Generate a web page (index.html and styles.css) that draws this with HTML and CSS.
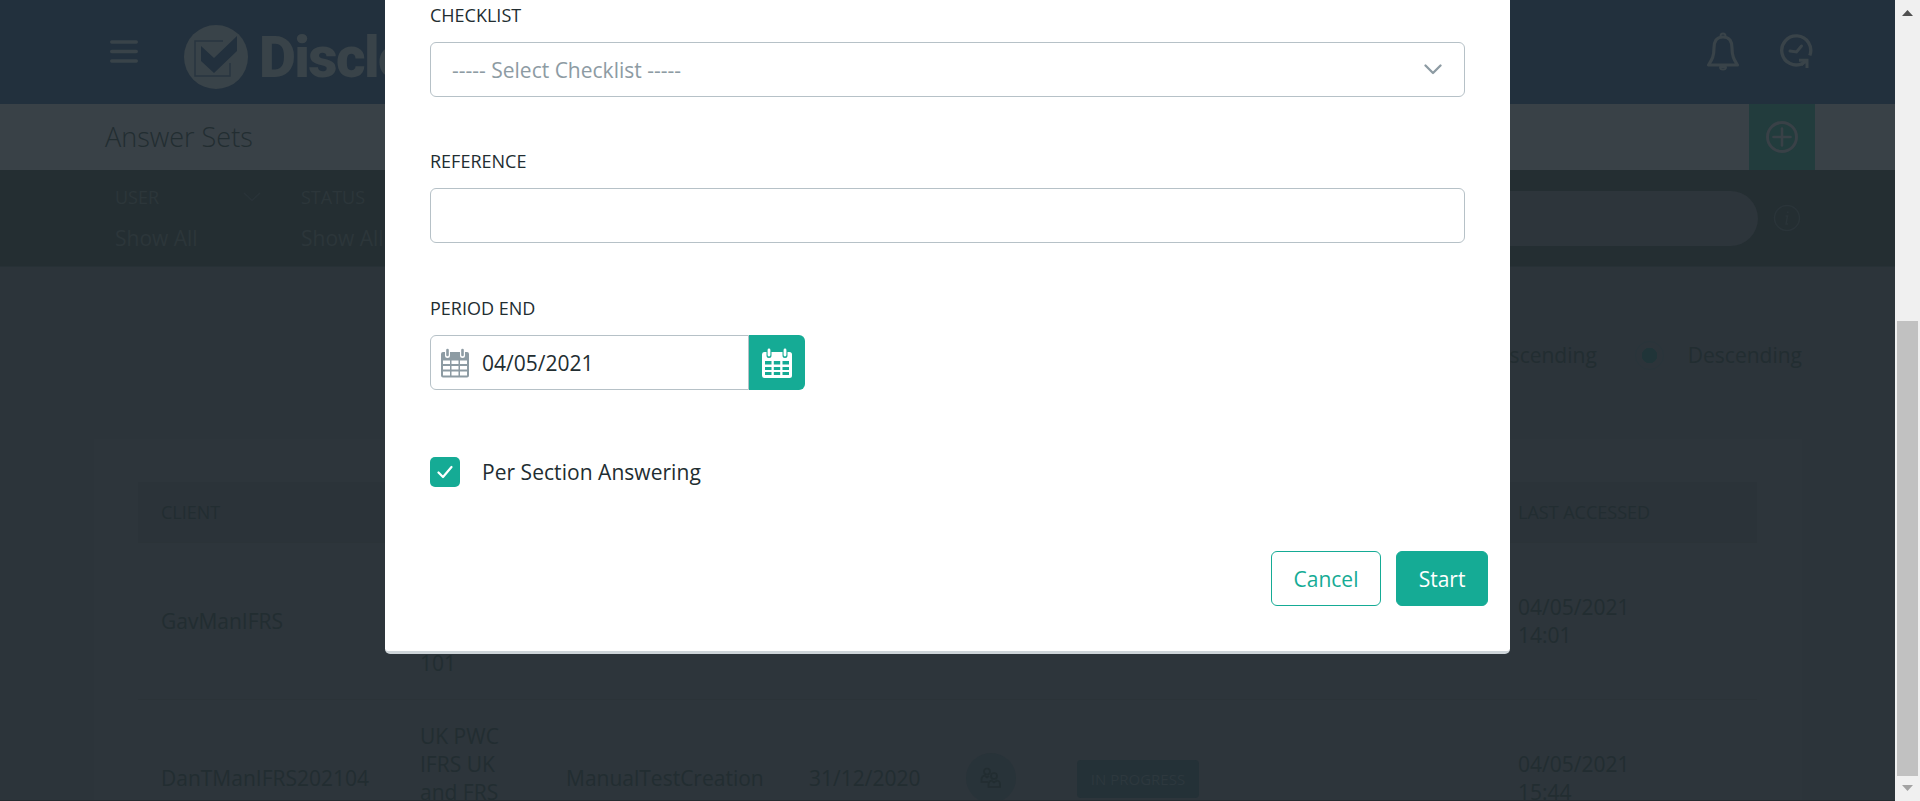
FILE: index.html
```html
<!DOCTYPE html>
<html lang="en">
<head>
<meta charset="utf-8">
<title>Answer Sets</title>
<link rel="stylesheet" href="styles.css">
</head>
<body>
<div class="page">
  <header class="topbar">
    <svg class="menu" width="28" height="23" viewBox="0 0 28 23"><path d="M1.7 2H26.3M1.7 11.5H26.3M1.7 21H26.3" stroke="currentColor" stroke-width="3.4" stroke-linecap="round"/></svg>
    <svg class="logo" width="64" height="66" viewBox="0 0 64 66">
      <circle cx="32" cy="33" r="32" fill="currentColor"/>
      <path d="M39 17H11V52H46V39" fill="none" stroke="#293640" stroke-width="1.5"/>
      <path d="M17 22L30 34L53 12V27L30 49L17 37Z" fill="#22303d"/>
    </svg>
    <span class="brand">Disclose</span>
    <svg class="bell" width="34" height="40" viewBox="0 0 34 40" fill="none" stroke="currentColor" stroke-width="3.2" stroke-linejoin="round"><path d="M17 5C10 5 8 10 8 16C8 25 5.500 28 2.500 33H31.500C28.500 28 26 25 26 16C26 10 24 5 17 5Z"/><path d="M14.500 4a2.500 2.500 0 0 1 5 0M14 35a3 2.500 0 0 0 6 0z" stroke-width="2"/></svg>
    <svg class="clock" width="34" height="34" viewBox="0 0 34 34" fill="none" stroke="currentColor" stroke-width="3.400"><path d="M30.800 21.500A14.500 14.500 0 1 0 24 29.200"/><path d="M11 17L17.500 18L22.500 12" stroke-linecap="round" stroke-width="3"/><path d="M20 26.300H28V34.500M28 26L22 31" stroke-width="3"/></svg>
  </header>
  <div class="titlebar">
    <h1>Answer Sets</h1>
    <div class="add"><svg width="34" height="34" viewBox="0 0 34 34" fill="none" stroke="currentColor" stroke-width="3"><circle cx="17" cy="17" r="14.500"/><path d="M17 8.500V25.500M8.500 17H25.500" stroke-width="2.600" stroke-linecap="round"/></svg></div>
  </div>
  <div class="filters">
    <div class="filter"><div class="cap">USER <svg width="18" height="12" viewBox="0 0 18 12" fill="none" stroke="#293338" stroke-width="1.500"><path d="M1 2L9 9.500L17 2"/></svg></div><div class="val">Show All</div></div>
    <div class="filter"><div class="cap">STATUS</div><div class="val">Show All</div></div>
    <div class="search"></div>
    <svg class="info" width="28" height="28" viewBox="0 0 28 28" fill="none" stroke="#2a3439" stroke-width="1.500"><circle cx="14" cy="14" r="12.500"/><path d="M12.500 12H14.500L13 20H15M14.800 7.500V9"/></svg>
  </div>
  <div class="order"><span>Ascending</span><i class="radio"></i><span>Descending</span></div>
  <main class="card">
    <div class="row head"><div>CLIENT</div><div></div><div></div><div></div><div></div><div></div><div>LAST ACCESSED</div></div>
    <div class="row"><div>GavManIFRS</div><div>UK PWC<br>IFRS UK<br>and FRS<br>101</div><div></div><div></div><div></div><div></div><div>04/05/2021<br>14:01</div></div>
    <div class="row"><div>DanTManIFRS202104</div><div>UK PWC<br>IFRS UK<br>and FRS<br>101</div><div>ManualTestCreation</div><div>31/12/2020</div>
      <div><span class="people"><svg width="22" height="22" viewBox="0 0 22 22" fill="none" stroke="currentColor" stroke-width="1.700"><circle cx="7" cy="4.500" r="3"/><circle cx="14" cy="9" r="3"/><path d="M8 15H1.500V12Q2 9 4.500 8.500L7 10.500L9 9M8.500 20V17Q9 14 11.500 13.500L14 15.500L17 13.500Q20 14 20 17V20Z"/></svg></span></div>
      <div><span class="badge">IN PROGRESS</span></div><div>04/05/2021<br>15:44</div></div>
  </main>
  <div class="edge"></div>
</div>

<section class="modal">
  <label class="label">CHECKLIST</label>
  <div class="field select"><span>----- Select Checklist -----</span><svg width="18" height="12" viewBox="0 0 18 12" fill="none" stroke="#8d9ba3" stroke-width="2.300" stroke-linecap="round" stroke-linejoin="round"><path d="M1.500 1.500L9 9L16.500 1.500"/></svg></div>
  <label class="label">REFERENCE</label>
  <div class="field"></div>
  <label class="label period">PERIOD END</label>
  <div class="date">
    <div class="field">
      <svg width="28" height="30" viewBox="0 0 28 30"><path fill="#8d9ba3" fill-rule="evenodd" d="M2 4H26Q28 4 28 6V27.500Q28 29.500 26 29.500H2Q0 29.500 0 27.500V6Q0 4 2 4ZM2 12.500V16H9V12.500ZM10.500 12.500V16H17.500V12.500ZM19 12.500V16H26V12.500ZM2 18V21.500H9V18ZM10.500 18V21.500H17.500V18ZM19 18V21.500H26V18ZM2 23.500V27.500H9V23.500ZM10.500 23.500V27.500H17.500V23.500ZM19 23.500V27.500H26V23.500Z"/><path d="M6.500 2.500V7.500M21.500 2.500V7.500" stroke="#fff" stroke-width="5" stroke-linecap="round"/><path d="M6.500 2V7M21.500 2V7" stroke="#8d9ba3" stroke-width="2.600" stroke-linecap="round"/></svg>
      <span>04/05/2021</span>
    </div>
    <div class="pick"><svg width="30" height="30" viewBox="0 0 30 30"><path fill="#fff" fill-rule="evenodd" d="M2.500 4H27.500Q30 4 30 6.500V27.500Q30 30 27.500 30H2.500Q0 30 0 27.500V6.500Q0 4 2.500 4ZM3 13V16.500H9.500V13ZM11.800 13V16.500H18.200V13ZM20.500 13V16.500H27V13ZM3 19V22H9.500V19ZM11.800 19V22H18.200V19ZM20.500 19V22H27V19ZM3 24V27H9.500V24ZM11.800 24V27H18.200V24ZM20.500 24V27H27V24Z"/><path d="M7 2.500V7.500M23 2.500V7.500" stroke="#15ab95" stroke-width="5" stroke-linecap="round"/><path d="M7 2V7M23 2V7" stroke="#fff" stroke-width="2.800" stroke-linecap="round"/></svg></div>
  </div>
  <div class="check"><span class="box"><svg width="16" height="14" viewBox="0 0 16 14" fill="none" stroke="#fff" stroke-width="2.200" stroke-linecap="round" stroke-linejoin="round"><path d="M1.500 7.500L6 12L14.500 2"/></svg></span><span>Per Section Answering</span></div>
  <div class="actions"><button class="btn">Cancel</button><button class="btn primary">Start</button></div>
</section>

<div class="scroll">
  <svg width="11" height="6" viewBox="0 0 11 6"><path d="M0 6L5.500 0L11 6Z" fill="#505050"/></svg>
  <div class="thumb"></div>
  <svg width="11" height="6" viewBox="0 0 11 6"><path d="M0 0L5.500 6L11 0Z" fill="#a3a3a3"/></svg>
</div>
</body>
</html>
```
FILE: styles.css
```css
* { box-sizing: border-box; }
body { margin: 0; width: 1920px; height: 801px; overflow: hidden; position: relative; display: flex; font: 400 21px/28px "Open Sans", sans-serif; color: #222d31; }
svg { display: block; flex: none; }
.page { width: 1895px; height: 801px; overflow: hidden; background: #2c343a; position: relative; }
.topbar { height: 104px; background: #22303d; color: #394349; display: flex; align-items: flex-start; padding-left: 110px; }
.menu { margin-top: 40px; }
.logo { margin: 24px 0 0 46px; }
.brand { margin: 24px 0 0 11px; width: 1447px; font: 900 57px/68px Roboto, sans-serif; letter-spacing: -1.6px; }
.bell { margin: 32px 0 0 0; }
.clock { margin: 34px 0 0 39px; }
.titlebar { height: 66px; background: #394147; display: flex; justify-content: space-between; padding: 0 80px 0 105px; }
h1 { margin: 0; font-weight: 300; font-size: 27px; line-height: 65px; }
.add { width: 66px; background: #223c3d; color: #394147; display: grid; place-items: center; }
.filters { height: 97px; background: #242e32; color: #2c363a; display: flex; padding: 13px 0 0 115px; border-bottom: 1px solid #273136; }
.filter { width: 186px; }
.cap { display: flex; justify-content: space-between; align-items: center; width: 146px; font-size: 18px; line-height: 28px; }
.val { margin-top: 13px; }
.search { margin: 8px 15px 0 0; width: 1271px; height: 55px; border-radius: 28px; background: #2d353b; }
.info { margin-top: 21px; }
.order { display: flex; align-items: center; justify-content: flex-end; height: 30px; margin: 73px 93px 69px 0; }
.radio { width: 29px; height: 29px; margin: 0 24px 0 38px; border-radius: 50%; border: 1px solid #29343a; background: radial-gradient(circle, #203438 7.5px, transparent 8px); }
.card { margin: 0 93px 0 94px; height: 400px; padding: 43px 45px 0 44px; background: #2d353b; }
.row { display: grid; grid-template-columns: 259px 146px 243px 157px 111px 441px 1fr; align-items: center; padding-left: 23px; height: 157px; border-bottom: 1px solid #2b3338; }
.row.head { height: 61px; font-size: 18px; background: #2b3339; }
.people { display: grid; place-items: center; width: 50px; height: 50px; border-radius: 50%; background: #283339; }
.badge { display: block; width: 122px; height: 38px; margin-top: 2px; border-radius: 4px; background: #243137; color: #2d383e; font: 400 15px/38px "Open Sans", sans-serif; text-align: center; }
.edge { position: absolute; left: 0; right: 0; bottom: 0; height: 1px; background: #242b30; }
.modal { position: absolute; left: 385px; top: 0; width: 1125px; height: 654px; padding: 0 45px; background: #fff; border-bottom: 3px solid #ced5d9; border-radius: 0 0 5px 5px; }
.label { display: block; font-size: 18px; line-height: 30px; margin-bottom: 12px; }
.label.period { padding-top: 1px; }
.field { height: 55px; border: 1px solid #b6c1c7; border-radius: 6px; margin-bottom: 49px; display: flex; align-items: center; }
.select { justify-content: space-between; padding: 0 22px 0 21px; color: #8d9ba3; }
.date { display: flex; width: 375px; margin-bottom: 67px; }
.date .field { flex: 1; margin: 0; border-radius: 6px 0 0 6px; padding-left: 10px; gap: 13px; }
.pick { width: 56px; height: 55px; border-radius: 0 6px 6px 0; background: #15ab95; display: grid; place-items: center; }
.check { display: flex; align-items: center; gap: 22px; height: 30px; letter-spacing: 0.04px; }
.box { width: 30px; height: 30px; border-radius: 5px; background: #15ab95; display: grid; place-items: center; }
.actions { display: flex; justify-content: flex-end; gap: 15px; margin: 64px -23px 0 0; }
.btn { width: 110px; height: 55px; padding: 0; border: 1px solid #15ab95; border-radius: 6px; background: #fff; color: #15ab95; font: 400 21px "Open Sans", sans-serif; }
.btn.primary { width: 92px; background: #15ab95; color: #fff; font-weight: 500; }
.scroll { width: 25px; height: 801px; background: #f0f0f0; display: flex; flex-direction: column; align-items: center; padding: 10px 0; }
.thumb { width: 21px; height: 455px; margin: 305px 0 9px; background: #c1c1c1; }
```
